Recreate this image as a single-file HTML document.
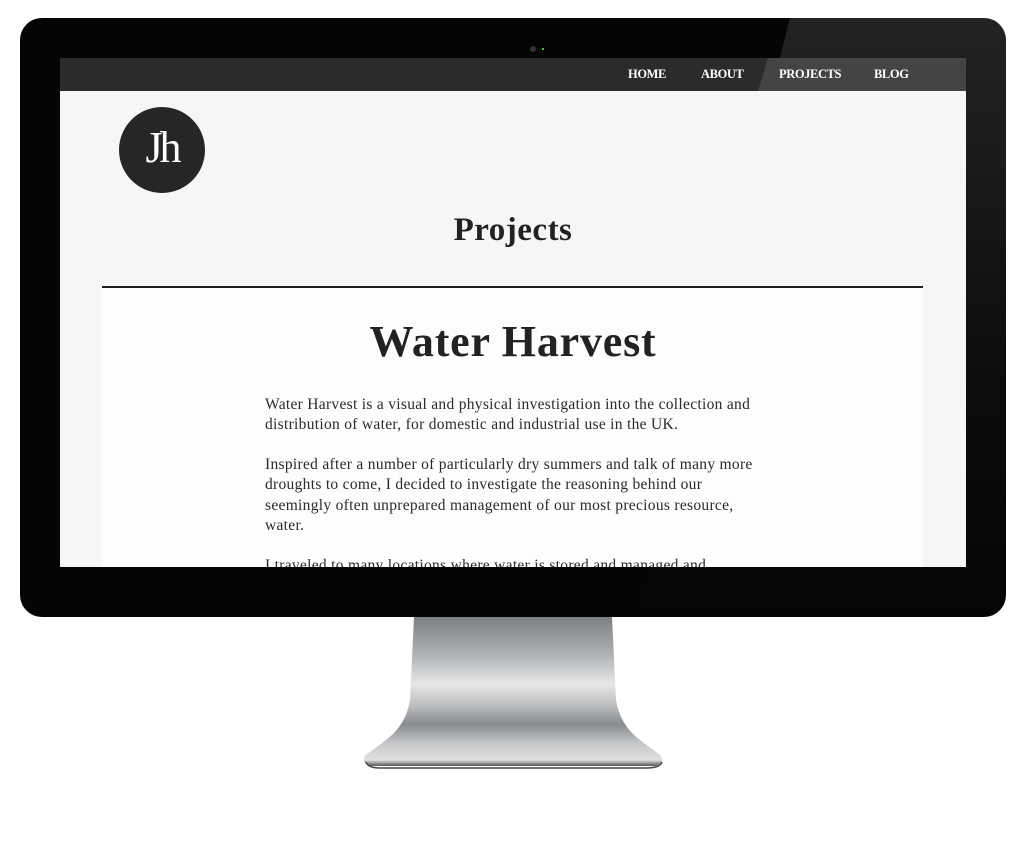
<!DOCTYPE html>
<html><head><meta charset="utf-8"><style>
*{margin:0;padding:0;box-sizing:border-box}
body{width:1024px;height:859px;background:#fff;position:relative;overflow:hidden;font-family:"Liberation Serif",serif}
.bezel{position:absolute;left:20px;top:18px;width:986px;height:599px;background:#050505;border-radius:22px;overflow:hidden}
.glare{position:absolute;left:0;top:0;width:986px;height:599px}
.cam{position:absolute;left:510px;top:28px;width:6px;height:6px;border-radius:50%;background:#333}
.led{position:absolute;left:522px;top:30px;width:2px;height:2px;background:#3c3}
.screen{position:absolute;left:60px;top:58px;width:906px;height:509px;background:#f6f6f6;overflow:hidden}
.nav{position:absolute;left:0;top:0;width:906px;height:33px;background:#2b2b2b}
.nav span{position:absolute;top:9px;color:#fff;font-weight:bold;font-size:12.5px;letter-spacing:-0.4px}
.logo{position:absolute;left:59px;top:49px;width:86px;height:86px;border-radius:50%;background:#262626;color:#fff;font-size:44px;text-align:center;line-height:82px;letter-spacing:-3px}
h1{position:absolute;left:0;width:906px;top:154px;text-align:center;font-size:33px;color:#222;font-weight:bold;letter-spacing:0.5px}
.rule{position:absolute;left:42px;top:228px;width:821px;height:2px;background:#1e1e1e}
.content{position:absolute;left:42px;top:230px;width:821px;height:300px;background:#fdfdfd}
h2{position:absolute;left:0;width:906px;top:258px;text-align:center;font-size:44px;color:#222;font-weight:bold;letter-spacing:0.8px}
.p{position:absolute;left:205px;font-size:15.5px;letter-spacing:0.3px;color:#2a2a2a;white-space:nowrap;line-height:20.3px}
</style></head><body>
<svg style="position:absolute;left:0;top:0" width="1024" height="859">
<defs>
<linearGradient id="st" x1="0" y1="0" x2="0" y2="1">
<stop offset="0" stop-color="#7d8084"/><stop offset="0.25" stop-color="#aeb1b4"/><stop offset="0.45" stop-color="#e6e7e8"/><stop offset="0.6" stop-color="#b9bbbd"/><stop offset="0.72" stop-color="#888b8f"/><stop offset="0.85" stop-color="#c6c8ca"/><stop offset="0.96" stop-color="#dfe0e1"/><stop offset="1" stop-color="#555"/>
</linearGradient>
</defs>
<path d="M414 617 L612 617 L616 700 Q620 725 640 740 L660 755 Q666 762 656 766 L370 766 Q360 762 366 755 L386 740 Q406 725 410 700 Z" fill="url(#st)"/>
<path d="M366 762 Q368 768 380 768 L646 768 Q660 768 662 762" stroke="#444" stroke-width="1.5" fill="none"/>
</svg>
<div class="bezel">
<div class="cam"></div><div class="led"></div>
<svg class="glare" width="986" height="599"><defs><linearGradient id="gl2" x1="0" y1="0" x2="0" y2="1"><stop offset="0" stop-color="#fff" stop-opacity="0.12"/><stop offset="0.6" stop-color="#fff" stop-opacity="0.03"/><stop offset="1" stop-color="#fff" stop-opacity="0"/></linearGradient></defs><polygon points="770,0 986,0 986,599 620,599" fill="url(#gl2)"/></svg>
</div>
<div class="screen">
<div class="nav">
<svg style="position:absolute;left:0;top:0" width="906" height="33"><polygon points="708,0 906,0 906,33 698,33" fill="#444"/></svg>
<span style="left:568px">HOME</span>
<span style="left:641px">ABOUT</span>
<span style="left:719px">PROJECTS</span>
<span style="left:814px">BLOG</span>
</div>
<div class="logo">Jh</div>
<h1>Projects</h1>
<div class="content"></div>
<div class="rule"></div>
<h2>Water Harvest</h2>
<div class="p" style="top:337px">Water Harvest is a visual and physical investigation into the collection and<br>distribution of water, for domestic and industrial use in the UK.</div>
<div class="p" style="top:397px">Inspired after a number of particularly dry summers and talk of many more<br>droughts to come, I decided to investigate the reasoning behind our<br>seemingly often unprepared management of our most precious resource,<br>water.</div>
<div class="p" style="top:498px">I traveled to many locations where water is stored and managed and</div>
</div>
</body></html>
